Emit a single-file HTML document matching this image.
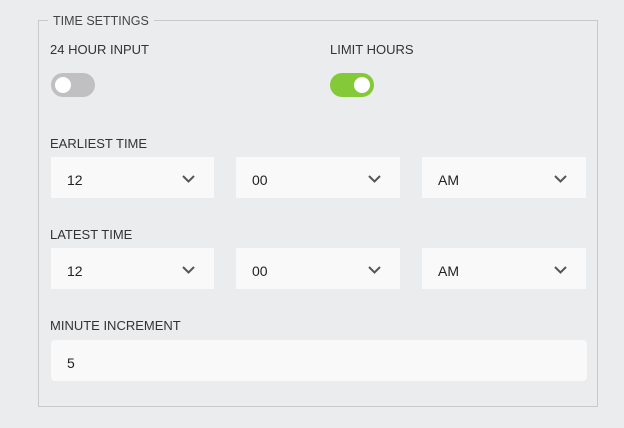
<!DOCTYPE html>
<html><head><meta charset="utf-8"><style>
*{box-sizing:border-box;margin:0;padding:0}
body{width:624px;height:428px;background:#ebecee;font-family:"Liberation Sans",sans-serif;color:#333;position:relative;overflow:hidden}
.fs{position:absolute;left:38px;top:20px;width:560px;height:387px;border:1px solid #c9c9cb}
.lg{position:absolute;left:48px;top:14px;padding:0 5px;background:#ebecee;font-size:12.5px;color:#444}
.lbl{position:absolute;font-size:13px;color:#333}
.tg{position:absolute;width:44px;height:24px;border-radius:12px;top:73px}
.tg i{position:absolute;top:4px;width:16px;height:16px;border-radius:50%;background:#fff}
.sel{position:absolute;height:41px;background:#f9f9f9;font-size:14px;color:#222;padding-left:16px;padding-top:3px;line-height:41px}
.sel svg{position:absolute;right:19px;top:18px}
</style></head><body>
<div class="fs"></div>
<div class="lg">TIME SETTINGS</div>
<div class="lbl" style="left:50px;top:42px">24 HOUR INPUT</div>
<div class="lbl" style="left:330px;top:42px">LIMIT HOURS</div>
<div class="tg" style="left:51px;background:#c0c0c2"><i style="left:4px"></i></div>
<div class="tg" style="left:330px;background:#84c938"><i style="left:24px"></i></div>
<div class="lbl" style="left:50px;top:136px">EARLIEST TIME</div>
<div class="sel" style="left:51px;top:157px;width:163px">12<svg width="13" height="8" viewBox="0 0 13 8"><path d="M1 1l5.5 5.5L12 1" stroke="#555" stroke-width="2" fill="none"/></svg></div>
<div class="sel" style="left:236px;top:157px;width:164px">00<svg width="13" height="8" viewBox="0 0 13 8"><path d="M1 1l5.5 5.5L12 1" stroke="#555" stroke-width="2" fill="none"/></svg></div>
<div class="sel" style="left:422px;top:157px;width:164px">AM<svg width="13" height="8" viewBox="0 0 13 8"><path d="M1 1l5.5 5.5L12 1" stroke="#555" stroke-width="2" fill="none"/></svg></div>
<div class="lbl" style="left:50px;top:227px">LATEST TIME</div>
<div class="sel" style="left:51px;top:248px;width:163px">12<svg width="13" height="8" viewBox="0 0 13 8"><path d="M1 1l5.5 5.5L12 1" stroke="#555" stroke-width="2" fill="none"/></svg></div>
<div class="sel" style="left:236px;top:248px;width:164px">00<svg width="13" height="8" viewBox="0 0 13 8"><path d="M1 1l5.5 5.5L12 1" stroke="#555" stroke-width="2" fill="none"/></svg></div>
<div class="sel" style="left:422px;top:248px;width:164px">AM<svg width="13" height="8" viewBox="0 0 13 8"><path d="M1 1l5.5 5.5L12 1" stroke="#555" stroke-width="2" fill="none"/></svg></div>
<div class="lbl" style="left:50px;top:318px">MINUTE INCREMENT</div>
<div class="sel" style="left:51px;top:340px;width:536px;border-radius:4px">5</div>
</body></html>
